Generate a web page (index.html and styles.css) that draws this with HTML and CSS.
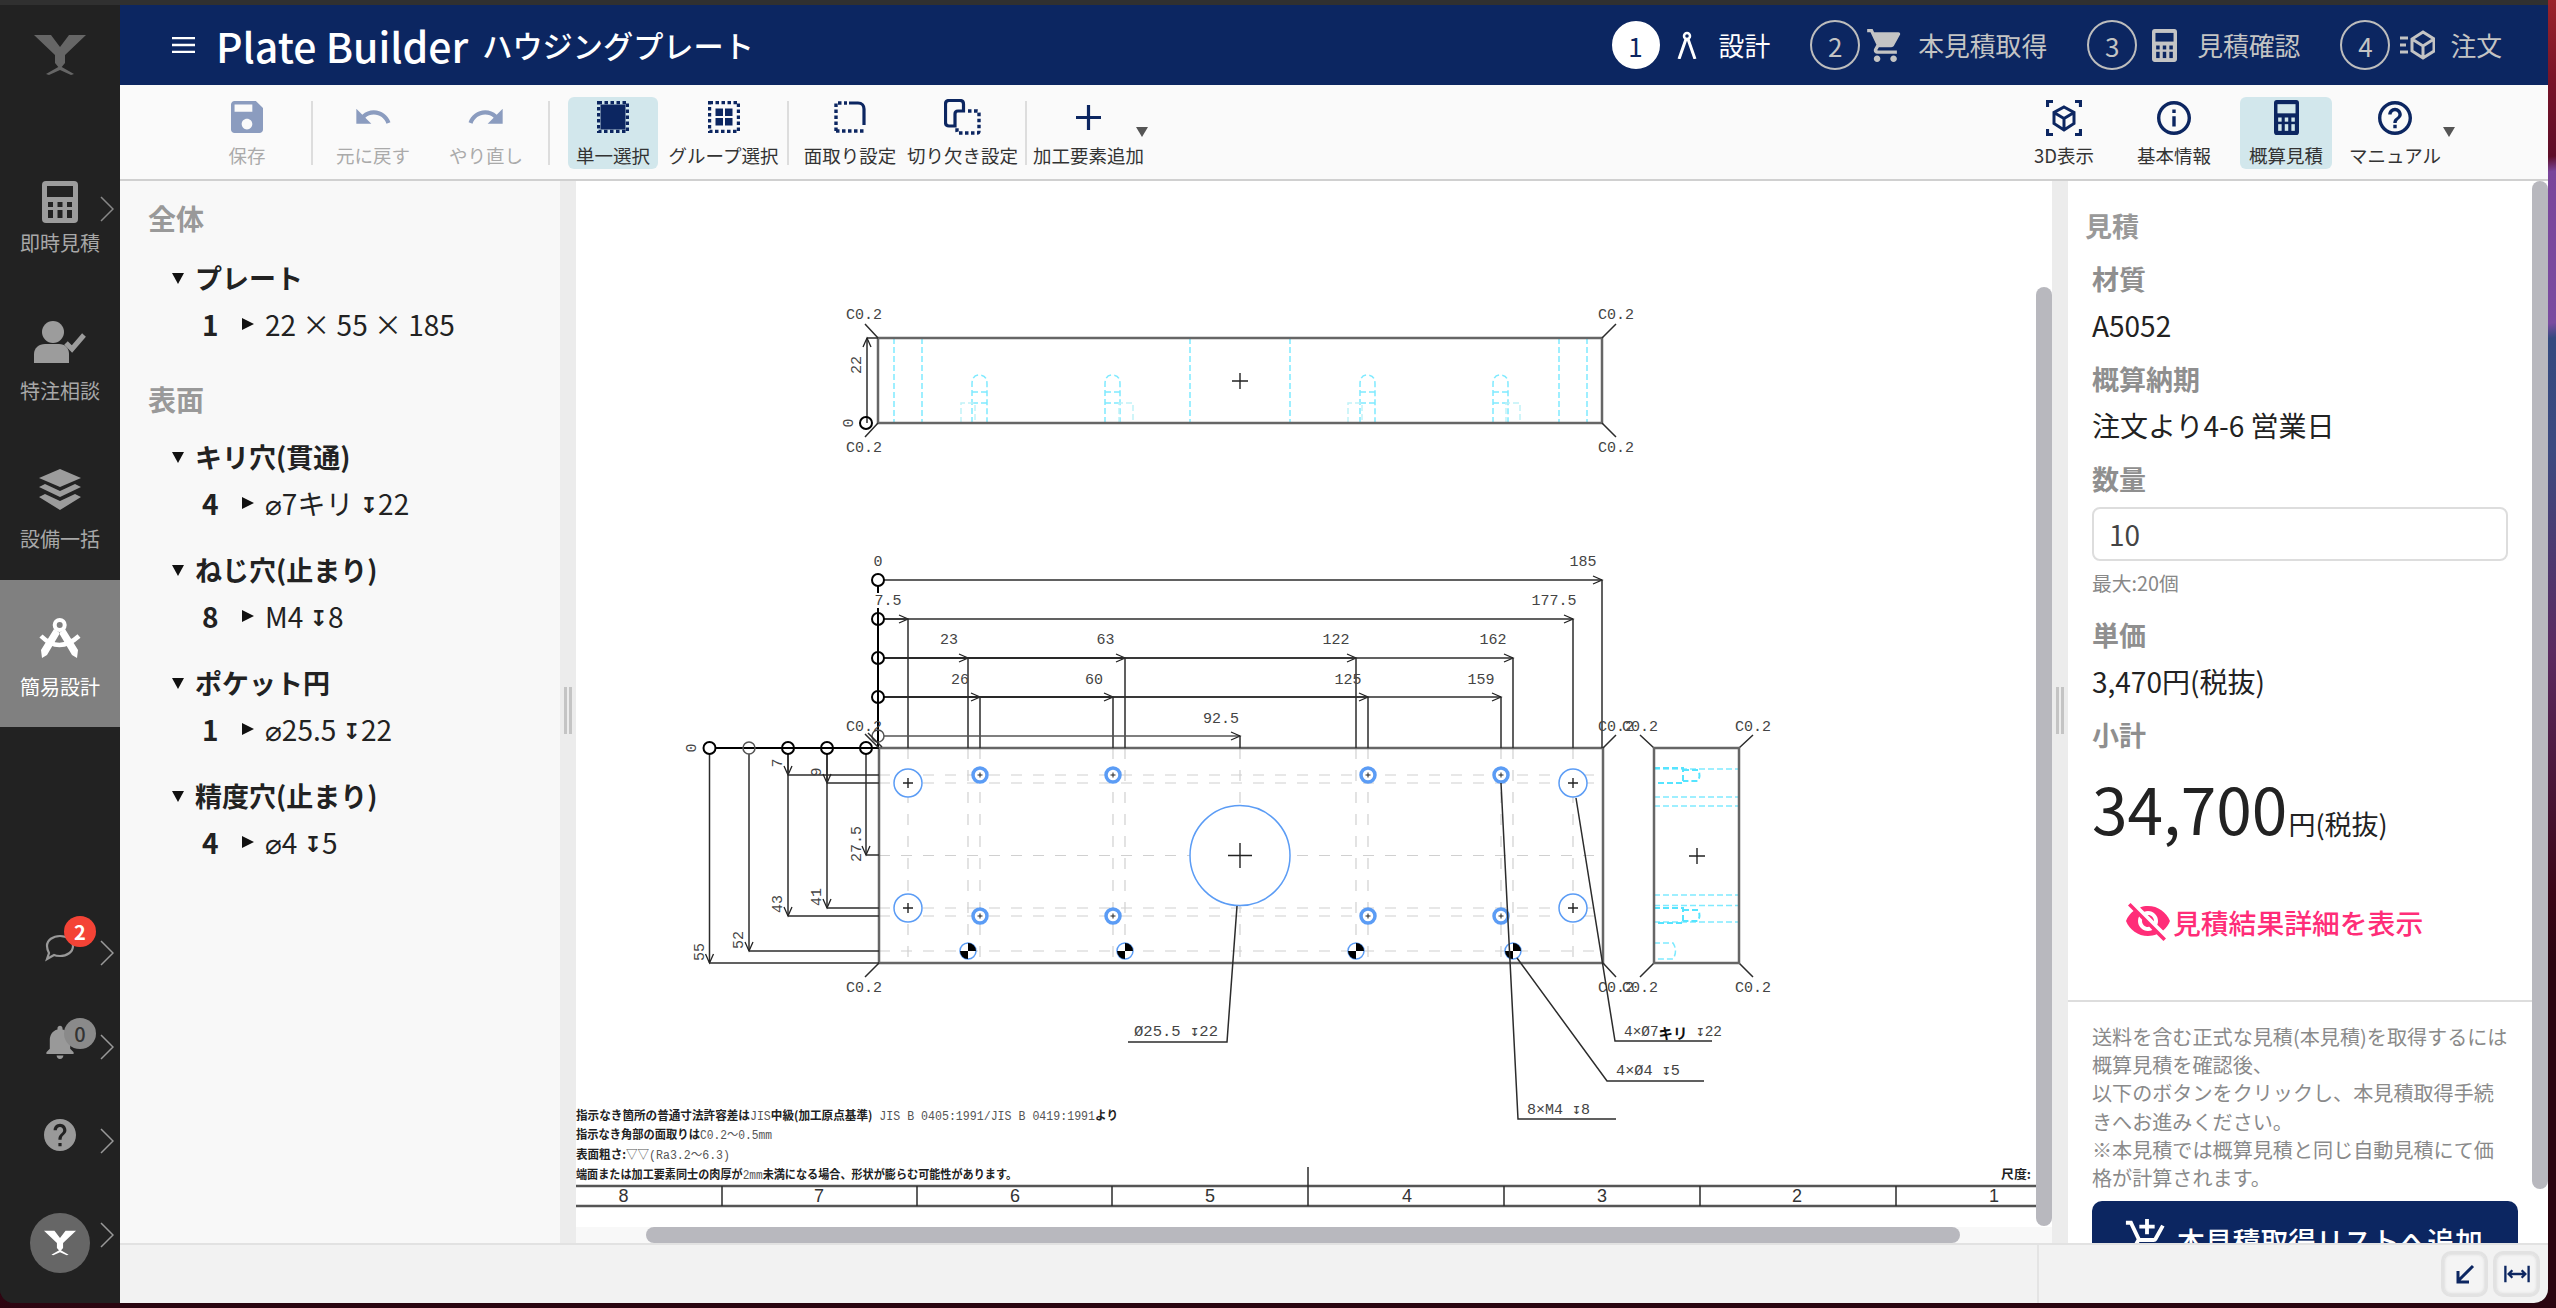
FILE: index.html
```html
<!DOCTYPE html>
<html lang="ja">
<head>
<meta charset="utf-8">
<title>Plate Builder</title>
<link rel="stylesheet" href="styles.css">
</head>
<body>
<svg class="defs" aria-hidden="true">
  <symbol id="i-calc" viewBox="0 0 36 42" preserveAspectRatio="none">
    <rect width="36" height="42" rx="4" fill="currentColor"/>
    <rect class="hole" x="5" y="5" width="26" height="11"/>
    <rect class="hole" x="6" y="21" width="5" height="5"/><rect class="hole" x="15.5" y="21" width="5" height="5"/><rect class="hole" x="25" y="21" width="5" height="5"/>
    <rect class="hole" x="6" y="29" width="5" height="8"/><rect class="hole" x="15.5" y="29" width="5" height="8"/><rect class="hole" x="25" y="29" width="5" height="8"/>
  </symbol>
  <symbol id="i-cube" viewBox="0 0 36 36">
    <path d="M18 7l10 5.500v11L18 30 8 23.500v-11zM8 12.500l10 6 10-6M18 18.500V30" fill="none" stroke="currentColor" stroke-width="3"/>
  </symbol>
  <symbol id="i-chev" viewBox="0 0 14 26">
    <path d="M1 1l12 12L1 25" fill="none" stroke="currentColor" stroke-width="1.5"/>
  </symbol>
  <symbol id="i-logo" viewBox="0 0 52 40">
    <path d="M0 0h17l9 12 9-12h17L31 20v8l-5 6-5-6v-8z" fill="currentColor"/>
    <path d="M12 39l14-8 14 8-3 1-11-5-11 5z" fill="currentColor"/>
  </symbol>
</svg>

<div class="window">
  <div class="titlestrip"></div>
  <div class="app">
    <nav class="sidebar">
      <div class="brand"><svg class="brand-logo"><use href="#i-logo"/></svg></div>
      <a class="nav-item nav-item-first">
        <svg class="nav-icon nav-calc"><use href="#i-calc"/></svg>
        <span class="nav-label">即時見積</span>
        <svg class="nav-chev"><use href="#i-chev"/></svg>
      </a>
      <a class="nav-item">
        <svg class="nav-icon" viewBox="0 0 54 42"><circle cx="20" cy="11" r="11" fill="currentColor"/><path d="M1 42V33c0-6 5-10 11-10h14c6 0 10 4 10 10v9z" fill="currentColor"/><path d="M33 22l6 6 12-14" fill="none" stroke="currentColor" stroke-width="5"/></svg>
        <span class="nav-label">特注相談</span>
      </a>
      <a class="nav-item">
        <svg class="nav-icon" viewBox="0 0 42 42"><path d="M21 0l21 9-21 9L0 9z" fill="currentColor"/><path d="M6 15l15 7 15-7 6 3-21 10L0 18z" fill="currentColor"/><path d="M6 25l15 7 15-7 6 3-21 13L0 28z" fill="currentColor"/></svg>
        <span class="nav-label">設備一括</span>
      </a>
      <a class="nav-item nav-item-active">
        <svg class="nav-icon" viewBox="0 0 42 42"><circle cx="20.700" cy="8" r="5" fill="none" stroke="currentColor" stroke-width="4"/><path d="M15 12l6 4L8 38l-5 3-1-8zM26 12l-6 4 13 22 5 3 1-8z" fill="currentColor"/><path d="M2 19q18 18 38 0" fill="none" stroke="currentColor" stroke-width="4.500"/></svg>
        <span class="nav-label">簡易設計</span>
      </a>
      <div class="nav-foot">
        <div class="foot-row">
          <div class="foot-box foot-up">
            <svg class="foot-chat" viewBox="0 0 30 28"><path d="M15 2c7 0 13 4 13 10s-6 10-13 10c-2 0-4 0-6-1l-7 4 2-6c-1-2-2-4-2-7C2 6 8 2 15 2z" fill="none" stroke="currentColor" stroke-width="2.200"/></svg>
            <span class="badge badge-red">2</span>
          </div>
          <svg class="foot-chev"><use href="#i-chev"/></svg>
        </div>
        <div class="foot-row">
          <div class="foot-box foot-up">
            <svg class="foot-bell" viewBox="2 2 20 20"><path d="M12 22c1.100 0 2-.9 2-2h-4c0 1.100.89 2 2 2zm6-6v-5c0-3.070-1.640-5.640-4.500-6.320V4c0-.83-.67-1.500-1.500-1.500s-1.500.67-1.500 1.500v.68C7.630 5.360 6 7.920 6 11v5l-2 2v1h16v-1l-2-2z" fill="currentColor"/></svg>
            <span class="badge badge-gray">0</span>
          </div>
          <svg class="foot-chev"><use href="#i-chev"/></svg>
        </div>
        <div class="foot-row">
          <div class="foot-box foot-up2">
            <svg class="foot-help" viewBox="2 2 20 20"><path d="M12 2C6.480 2 2 6.480 2 12s4.480 10 10 10 10-4.480 10-10S17.520 2 12 2zm1 17h-2v-2h2v2zm2.070-7.750l-.9.92C13.450 12.900 13 13.500 13 15h-2v-.5c0-1.100.45-2.100 1.170-2.830l1.240-1.260c.37-.36.59-.86.59-1.410 0-1.100-.9-2-2-2s-2 .9-2 2H8c0-2.210 1.790-4 4-4s4 1.790 4 4c0 .88-.36 1.680-.93 2.250z" fill="currentColor"/></svg>
          </div>
          <svg class="foot-chev"><use href="#i-chev"/></svg>
        </div>
        <div class="foot-row">
          <div class="foot-box foot-down">
            <div class="avatar"><svg class="avatar-logo"><use href="#i-logo"/></svg></div>
          </div>
          <svg class="foot-chev"><use href="#i-chev"/></svg>
        </div>
      </div>
    </nav>

    <div class="main">
      <header class="appbar">
        <svg class="menu-icon" viewBox="0 0 23 16"><path d="M0 1h23M0 8h23M0 15h23" stroke="currentColor" stroke-width="2.400"/></svg>
        <span class="app-title">Plate Builder</span>
        <span class="app-sub">ハウジングプレート</span>
        <ol class="steps">
          <li class="step step-current">
            <span class="step-num">1</span>
            <svg class="step-icon si-compass" viewBox="0 0 20 28"><circle cx="10" cy="5" r="3" fill="none" stroke="currentColor" stroke-width="2.500"/><path d="M9 8L2 28M11 8l7 20" stroke="currentColor" stroke-width="3"/></svg>
            <span class="step-text st-1">設計</span>
          </li>
          <li class="step">
            <span class="step-num">2</span>
            <svg class="step-icon si-cart" viewBox="1 2 21 20"><path d="M7 18c-1.100 0-1.990.9-1.990 2S5.900 22 7 22s2-.9 2-2-.9-2-2-2zM1 2v2h2l3.600 7.590-1.350 2.450c-.16.28-.25.61-.25.96 0 1.100.9 2 2 2h12v-2H7.420c-.14 0-.25-.11-.25-.25l.03-.12.9-1.630h7.450c.75 0 1.410-.41 1.750-1.030l3.580-6.490c.08-.14.12-.31.12-.48 0-.55-.45-1-1-1H5.210l-.94-2H1zm16 16c-1.100 0-1.990.9-1.990 2s.89 2 1.990 2 2-.9 2-2-.9-2-2-2z" fill="currentColor"/></svg>
            <span class="step-text st-2">本見積取得</span>
          </li>
          <li class="step">
            <span class="step-num">3</span>
            <svg class="step-icon si-calc"><use href="#i-calc"/></svg>
            <span class="step-text st-3">見積確認</span>
          </li>
          <li class="step">
            <span class="step-num">4</span>
            <svg class="step-icon si-order" viewBox="0 0 35 30"><path d="M0 8h8M0 15h6M0 22h8" stroke="currentColor" stroke-width="3"/><path d="M23 2l11 7v12l-11 7-11-7V9zM12 9l11 7 11-7M23 16v12" fill="none" stroke="currentColor" stroke-width="3"/></svg>
            <span class="step-text st-4">注文</span>
          </li>
        </ol>
      </header>

      <div class="toolbar">
        <button class="tool tool-save is-disabled"><svg class="tool-icon" viewBox="3 3 18 18"><path d="M17 3H5c-1.110 0-2 .9-2 2v14c0 1.100.89 2 2 2h14c1.100 0 2-.9 2-2V7l-4-4zm-5 16c-1.660 0-3-1.340-3-3s1.340-3 3-3 3 1.340 3 3-1.340 3-3 3zm3-10H5V5h10v4z"/></svg><span class="tool-label">保存</span></button>
        <span class="sep sep-1"></span>
        <button class="tool tool-undo is-disabled"><svg class="tool-icon" viewBox="0 0 24 24"><path d="M12.500 8c-2.650 0-5.050.99-6.900 2.600L2 7v9h9l-3.620-3.620c1.390-1.160 3.160-1.880 5.120-1.880 3.540 0 6.550 2.310 7.600 5.500l2.370-.78C21.080 11.030 17.150 8 12.500 8z"/></svg><span class="tool-label">元に戻す</span></button>
        <button class="tool tool-redo is-disabled"><svg class="tool-icon" viewBox="0 0 24 24"><path d="M18.400 10.600C16.550 8.990 14.150 8 11.500 8c-4.650 0-8.580 3.030-9.960 7.220L3.900 16c1.050-3.190 4.050-5.500 7.600-5.500 1.950 0 3.730.72 5.120 1.880L13 16h9V7l-3.600 3.600z"/></svg><span class="tool-label">やり直し</span></button>
        <span class="sep sep-2"></span>
        <button class="tool tool-single is-active"><svg class="tool-icon" viewBox="0 0 32 32"><rect x="3.500" y="3.500" width="25" height="25"/><rect class="dash" x="1.500" y="1.500" width="29" height="29"/></svg><span class="tool-label">単一選択</span></button>
        <button class="tool tool-group"><svg class="tool-icon" viewBox="0 0 32 32"><rect class="dash" x="1.500" y="1.500" width="29" height="29"/><rect x="7.500" y="7.500" width="7.500" height="7.500"/><rect x="17" y="7.500" width="7.500" height="7.500"/><rect x="7.500" y="17" width="7.500" height="7.500"/><rect x="17" y="17" width="7.500" height="7.500"/></svg><span class="tool-label">グループ選択</span></button>
        <span class="sep sep-3"></span>
        <button class="tool tool-chamfer"><svg class="tool-icon" viewBox="0 0 32 32"><path class="dash" d="M2 30V2h11M2 30h28"/><path class="solid" d="M15 2h9c4 0 6 3 6 6v16"/></svg><span class="tool-label">面取り設定</span></button>
        <button class="tool tool-notch"><svg class="tool-icon" viewBox="0 0 37 36"><path class="solid" d="M11 27H5c-2.500 0-3.500-1-3.500-3.500V5C1.500 2.500 2.500 1.500 5 1.500h11c2.500 0 3.500 1 3.500 3.500v7H14c-2 0-3 1-3 3z"/><path class="dash" d="M24 12h9c1.500 0 2 .5 2 2v18c0 1.500-.5 2-2 2H15c-1.500 0-2-.5-2-2v-4"/></svg><span class="tool-label">切り欠き設定</span></button>
        <span class="sep sep-4"></span>
        <button class="tool tool-add"><svg class="tool-icon" viewBox="0 0 25 25"><path d="M0 12.500h25M12.500 0v25" class="solid"/></svg><span class="tool-label">加工要素追加</span><span class="caret caret-add"></span></button>

        <div class="tool-right">
          <button class="tool tool-3d"><svg class="tool-icon" viewBox="0 0 36 36"><path class="solid" d="M7 1.500H1.500V7M29 1.500h5.500V7M7 34.500H1.500V29M29 34.500h5.500V29"/><use href="#i-cube"/></svg><span class="tool-label">3D表示</span></button>
          <button class="tool tool-info"><svg class="tool-icon" viewBox="2 2 20 20"><path d="M11 7h2v2h-2zm0 4h2v6h-2zm1-9C6.480 2 2 6.480 2 12s4.480 10 10 10 10-4.480 10-10S17.520 2 12 2zm0 18c-4.410 0-8-3.590-8-8s3.590-8 8-8 8 3.590 8 8-3.590 8-8 8z"/></svg><span class="tool-label">基本情報</span></button>
          <button class="tool tool-calc is-active"><svg class="tool-icon tool-calc-icon"><use href="#i-calc"/></svg><span class="tool-label">概算見積</span></button>
          <button class="tool tool-manual"><svg class="tool-icon" viewBox="2 2 20 20"><path d="M11 18h2v-2h-2v2zm1-16C6.480 2 2 6.480 2 12s4.480 10 10 10 10-4.480 10-10S17.520 2 12 2zm0 18c-4.410 0-8-3.590-8-8s3.590-8 8-8 8 3.590 8 8-3.590 8-8 8zm0-14c-2.210 0-4 1.790-4 4h2c0-1.100.9-2 2-2s2 .9 2 2c0 2-3 1.750-3 5h2c0-2.250 3-2.500 3-5 0-2.210-1.790-4-4-4z"/></svg><span class="tool-label">マニュアル</span><span class="caret caret-manual"></span></button>
        </div>
      </div>

      <div class="workspace">
        <aside class="tree">
          <section class="tree-sec">
            <h2 class="tree-title">全体</h2>
            <div class="group">
              <h3 class="group-head"><i class="tri-down"></i>プレート</h3>
              <div class="group-row"><span class="count">1</span><i class="tri-right"></i>22 × 55 × 185</div>
            </div>
          </section>
          <section class="tree-sec tree-sec-next">
            <h2 class="tree-title">表面</h2>
            <div class="group">
              <h3 class="group-head"><i class="tri-down"></i>キリ穴(貫通)</h3>
              <div class="group-row"><span class="count">4</span><i class="tri-right"></i>⌀7キリ <span class="depth">↧</span>22</div>
            </div>
            <div class="group">
              <h3 class="group-head"><i class="tri-down"></i>ねじ穴(止まり)</h3>
              <div class="group-row"><span class="count">8</span><i class="tri-right"></i>M4 <span class="depth">↧</span>8</div>
            </div>
            <div class="group">
              <h3 class="group-head"><i class="tri-down"></i>ポケット円</h3>
              <div class="group-row"><span class="count">1</span><i class="tri-right"></i>⌀25.5 <span class="depth">↧</span>22</div>
            </div>
            <div class="group">
              <h3 class="group-head"><i class="tri-down"></i>精度穴(止まり)</h3>
              <div class="group-row"><span class="count">4</span><i class="tri-right"></i>⌀4 <span class="depth">↧</span>5</div>
            </div>
          </section>
        </aside>

        <div class="splitter"><span class="grip"></span></div>

        <div class="canvas">
          <svg class="drawing" viewBox="576 181 1460 1046">
            <defs>
              <marker id="arr" markerWidth="12" markerHeight="10" refX="10" refY="5" orient="auto" markerUnits="userSpaceOnUse"><path class="arrowhead" d="M1 1L10 5 1 9"/></marker>
              <g id="holeTall"><path class="cy" d="M0 423V384q0-9 7.500-9T15 384v39M0 392h15M0 403h15"/></g>
              <g id="holeShort"><path class="cy cy-light" d="M0 423V403h14v20"/></g>
              <g id="tap"><circle class="bl-thick" r="7"/><path class="cross-s" d="M-2.500 0h5M0-2.500v5"/></g>
              <g id="drill"><circle class="bl" r="14"/><path class="cross" d="M-5 0h10M0-5v10"/></g>
              <g id="datum"><circle class="bl" r="8"/><path class="fillk" d="M0 0V-8A8 8 0 0 1 8 0zM0 0V8A8 8 0 0 1-8 0z"/></g>
              <g id="sideHole"><path class="cy cy-strong" d="M0 0h29v15H0zM29 2h15q3 5 0 11H29"/></g>
            </defs>

            <!-- top view -->
            <g class="cy-group">
              <path class="cy" d="M894 338v85M922 338v85M1190 338v85M1290 338v85M1559 338v85M1587 338v85M894 338h28M1559 338h28M894 423h28M1559 423h28"/>
              <use href="#holeTall" x="972"/><use href="#holeShort" x="961"/>
              <use href="#holeTall" x="1105"/><use href="#holeShort" x="1119"/>
              <use href="#holeTall" x="1360"/><use href="#holeShort" x="1348"/>
              <use href="#holeTall" x="1493"/><use href="#holeShort" x="1506"/>
            </g>
            <rect class="outline" x="878" y="338" width="724" height="85"/>
            <path class="dim" d="M865 324l13 14M865 437l13-14M1616 324l-14 14M1616 437l-14-14"/>
            <path class="dim" d="M867 338h11"/>
            <path class="dim" marker-end="url(#arr)" d="M867 423V338"/>
            <ellipse class="dim-circle" cx="866" cy="423" rx="6" ry="6"/>
            <path class="cross" d="M1232 381h16M1240 373v16"/>
            <text class="lbl" x="864" y="315">C0.2</text><text class="lbl" x="1616" y="315">C0.2</text>
            <text class="lbl" x="864" y="448">C0.2</text><text class="lbl" x="1616" y="448">C0.2</text>
            <text class="lbl" transform="rotate(-90 857 365)" x="857" y="365">22</text>
            <text class="lbl" transform="rotate(-90 849 423)" x="849" y="423">0</text>

            <!-- front view centre lines -->
            <path class="cl" d="M879 775h724M879 783h724M879 855.500h724M879 908h724M879 916h724M879 951h724"/>
            <path class="cl" d="M908 748v215M968 748v215M980 748v215M1113 748v215M1125 748v215M1240 748v215M1356 748v215M1368 748v215M1501 748v215M1513 748v215M1573 748v215"/>
            <rect class="outline" x="879" y="748" width="724" height="215"/>

            <!-- holes -->
            <circle class="bl" cx="1240" cy="855.500" r="50"/>
            <path class="cross" d="M1228 855.500h24M1240 843v25"/>
            <use href="#drill" x="908" y="783"/><use href="#drill" x="908" y="908"/><use href="#drill" x="1573" y="783"/><use href="#drill" x="1573" y="908"/>
            <use href="#tap" x="980" y="775"/><use href="#tap" x="1113" y="775"/><use href="#tap" x="1368" y="775"/><use href="#tap" x="1501" y="775"/>
            <use href="#tap" x="980" y="916"/><use href="#tap" x="1113" y="916"/><use href="#tap" x="1368" y="916"/><use href="#tap" x="1501" y="916"/>
            <use href="#datum" x="968" y="951"/><use href="#datum" x="1125" y="951"/><use href="#datum" x="1356" y="951"/><use href="#datum" x="1513" y="951"/>

            <!-- top ordinate dimensions -->
            <path class="dim dim-b" d="M878 586V593M878 608V748"/>
            <path class="dim" marker-end="url(#arr)" d="M884 580H1602"/><path class="dim" d="M1602 580V748"/>
            <path class="dim" marker-end="url(#arr)" d="M884 619H908"/><path class="dim" marker-end="url(#arr)" d="M884 619H1573"/><path class="dim" d="M908 619V748M1573 619V748"/>
            <path class="dim dim-b" marker-end="url(#arr)" d="M884 658H968"/><path class="dim dim-b" marker-end="url(#arr)" d="M884 658H1125"/><path class="dim" marker-end="url(#arr)" d="M884 658H1356"/><path class="dim" marker-end="url(#arr)" d="M884 658H1513"/><path class="dim" d="M968 658V748M1125 658V748M1356 658V748M1513 658V748"/>
            <path class="dim dim-b" marker-end="url(#arr)" d="M884 697H980"/><path class="dim dim-b" marker-end="url(#arr)" d="M884 697H1113"/><path class="dim" marker-end="url(#arr)" d="M884 697H1368"/><path class="dim" marker-end="url(#arr)" d="M884 697H1501"/><path class="dim" d="M980 697V748M1113 697V748M1368 697V748M1501 697V748"/>
            <path class="dim dim-g" marker-end="url(#arr)" d="M884 736H1240"/><path class="dim" d="M1240 736V748"/>
            <circle class="dim-circle" cx="878" cy="580" r="6"/><circle class="dim-circle" cx="878" cy="619" r="6"/><circle class="dim-circle" cx="878" cy="658" r="6"/><circle class="dim-circle" cx="878" cy="697" r="6"/><circle class="dim-circle dim-circle-g" cx="878" cy="736" r="6"/>

            <!-- left ordinate dimensions -->
            <path class="dim dim-b" d="M715 748H879"/>
            <path class="dim" marker-end="url(#arr)" d="M709.500 754V963"/><path class="dim" d="M709.500 963H879"/>
            <path class="dim" marker-end="url(#arr)" d="M749 754V951"/><path class="dim" d="M749 951H879"/>
            <path class="dim" marker-end="url(#arr)" d="M788 754V775"/><path class="dim" marker-end="url(#arr)" d="M788 754V916"/><path class="dim" d="M788 775H879M788 916H879"/>
            <path class="dim" marker-end="url(#arr)" d="M827 754V783"/><path class="dim" marker-end="url(#arr)" d="M827 754V908"/><path class="dim" d="M827 783H879M827 908H879"/>
            <path class="dim" marker-end="url(#arr)" d="M866 754V855"/><path class="dim" d="M866 855H879"/>
            <circle class="dim-circle" cx="709.500" cy="748" r="6"/><circle class="dim-circle dim-circle-g" cx="749" cy="748" r="6"/><circle class="dim-circle" cx="788" cy="748" r="6"/><circle class="dim-circle" cx="827" cy="748" r="6"/><circle class="dim-circle" cx="866" cy="748" r="6"/>

            <!-- chamfer leaders -->
            <path class="dim" d="M879 748l-14-14M882 747l-14-14M879 963l-14 14M1603 748l13-13M1603 963l13 14M1654 748l-14-13M1654 963l-14 14M1739 748l14-13M1739 963l14 14"/>

            <!-- side view -->
            <path class="cy" d="M1654 769h85M1654 797h85M1654 806h85M1654 895h85M1654 905.500h85M1654 922h85M1739 769v153"/>
            <use href="#sideHole" x="1654" y="768"/><use href="#sideHole" x="1654" y="908"/>
            <path class="cy" d="M1654 943h19q5 8 0 16h-19z"/>
            <rect class="outline" x="1654" y="748" width="85" height="215"/>
            <path class="cross" d="M1689 856h16M1697 848v16"/>

            <!-- labels -->
            <text class="lbl" x="878" y="562">0</text><text class="lbl" x="1583" y="562">185</text>
            <text class="lbl" x="888" y="601">7.5</text><text class="lbl" x="1554" y="601">177.5</text>
            <text class="lbl" x="949" y="640">23</text><text class="lbl" x="1105.500" y="640">63</text><text class="lbl" x="1336" y="640">122</text><text class="lbl" x="1493" y="640">162</text>
            <text class="lbl" x="960" y="680">26</text><text class="lbl" x="1094" y="680">60</text><text class="lbl" x="1348" y="680">125</text><text class="lbl" x="1481" y="680">159</text>
            <text class="lbl" x="1221" y="719">92.5</text>
            <text class="lbl" x="864" y="727">C0.2</text><text class="lbl" x="1616" y="727">C0.2</text><text class="lbl" x="1640" y="727">C0.2</text><text class="lbl" x="1753" y="727">C0.2</text>
            <text class="lbl" x="864" y="988">C0.2</text><text class="lbl" x="1616" y="988">C0.2</text><text class="lbl" x="1640" y="988">C0.2</text><text class="lbl" x="1753" y="988">C0.2</text>
            <text class="lbl" transform="rotate(-90 692 748)" x="692" y="748">0</text>
            <text class="lbl" transform="rotate(-90 700 952)" x="700" y="952">55</text>
            <text class="lbl" transform="rotate(-90 739 940)" x="739" y="940">52</text>
            <text class="lbl" transform="rotate(-90 778 763)" x="778" y="763">7</text>
            <text class="lbl" transform="rotate(-90 778 904)" x="778" y="904">43</text>
            <text class="lbl" transform="rotate(-90 817 772)" x="817" y="772">9</text>
            <text class="lbl" transform="rotate(-90 817 897)" x="817" y="897">41</text>
            <text class="lbl" transform="rotate(-90 857 844)" x="857" y="844">27.5</text>

            <!-- callouts -->
            <path class="dim" d="M1237 906L1227 1042H1128"/>
            <path class="dim" d="M1501 783L1518 1119H1616"/>
            <path class="dim" d="M1517 958L1607 1081H1704"/>
            <path class="dim" d="M1576 798L1615 1041H1712"/>
            <text class="lbl lbl-start" x="1134" y="1032" textLength="84" lengthAdjust="spacingAndGlyphs">Ø25.5 ↧22</text>
            <text class="lbl lbl-start" x="1527" y="1110" textLength="63" lengthAdjust="spacingAndGlyphs">8×M4 ↧8</text>
            <text class="lbl lbl-start" x="1616" y="1071" textLength="64" lengthAdjust="spacingAndGlyphs">4×Ø4 ↧5</text>
            <text class="lbl lbl-start" x="1624" y="1032" textLength="98" lengthAdjust="spacingAndGlyphs">4×Ø7<tspan class="lbl-jp">キリ</tspan> ↧22</text>

            <!-- notes -->
            <text class="note" x="576" y="1120" textLength="542" lengthAdjust="spacingAndGlyphs">指示なき箇所の普通寸法許容差は<tspan class="note-m">JIS</tspan>中級(加工原点基準)<tspan class="note-m"> JIS B 0405:1991/JIS B 0419:1991</tspan>より</text>
            <text class="note" x="576" y="1139" textLength="196" lengthAdjust="spacingAndGlyphs">指示なき角部の面取りは<tspan class="note-m">C0.2～0.5mm</tspan></text>
            <text class="note" x="576" y="1159" textLength="154" lengthAdjust="spacingAndGlyphs">表面粗さ:<tspan class="note-m">▽▽(Ra3.2～6.3)</tspan></text>
            <text class="note" x="576" y="1179" textLength="441" lengthAdjust="spacingAndGlyphs">端面または加工要素同士の肉厚が<tspan class="note-m">2mm</tspan>未満になる場合、形状が膨らむ可能性があります。</text>
            <text class="note" x="2001" y="1179" textLength="30" lengthAdjust="spacingAndGlyphs">尺度:</text>

            <!-- title block -->
            <path class="frame" d="M576 1186H2036M576 1206H2036"/>
            <path class="dim" d="M722 1186v20M917 1186v20M1112 1186v20M1308 1167v39M1504 1186v20M1700 1186v20M1896 1186v20"/>
            <text class="zone" x="623.500" y="1196">8</text><text class="zone" x="819" y="1196">7</text><text class="zone" x="1015" y="1196">6</text><text class="zone" x="1210" y="1196">5</text><text class="zone" x="1407" y="1196">4</text><text class="zone" x="1602" y="1196">3</text><text class="zone" x="1797" y="1196">2</text><text class="zone" x="1994" y="1196">1</text>
          </svg>
          <div class="hscroll"><span class="hthumb"></span></div>
          <span class="vthumb"></span>
        </div>

        <div class="splitter"><span class="grip"></span></div>

        <aside class="quote">
          <h2 class="quote-title">見積</h2>
          <div class="field"><div class="field-label">材質</div><div class="field-value">A5052</div></div>
          <div class="field field-tight"><div class="field-label">概算納期</div><div class="field-value">注文より4-6 営業日</div></div>
          <div class="field field-tight"><div class="field-label">数量</div>
            <input class="qty" type="text" value="10">
            <div class="hint">最大:20個</div>
          </div>
          <div class="field field-price"><div class="field-label">単価</div><div class="field-value">3,470円(税抜)</div></div>
          <div class="field field-tight"><div class="field-label field-label-tot">小計</div>
            <div class="total"><span class="total-num">34,700</span><span class="total-unit">円(税抜)</span></div>
          </div>
          <a class="detail-link">
            <svg class="eye" viewBox="1 3 22 19"><path d="M12 7c2.760 0 5 2.240 5 5 0 .65-.13 1.260-.36 1.830l2.920 2.920c1.510-1.260 2.700-2.890 3.430-4.750-1.730-4.390-6-7.500-11-7.500-1.400 0-2.740.25-3.980.7l2.160 2.160C10.740 7.130 11.350 7 12 7zM2 4.270l2.280 2.280.46.46C3.080 8.300 1.780 10.020 1 12c1.730 4.390 6 7.500 11 7.500 1.550 0 3.030-.3 4.380-.84l.42.42L19.730 22 21 20.730 3.270 3 2 4.270zM7.530 9.800l1.550 1.550c-.05.21-.08.43-.08.65 0 1.660 1.340 3 3 3 .22 0 .44-.03.65-.08l1.550 1.550c-.67.33-1.410.53-2.200.53-2.760 0-5-2.240-5-5 0-.79.2-1.530.53-2.200zm4.310-.78l3.150 3.150.02-.16c0-1.660-1.340-3-3-3l-.17.01z"/></svg>
            <span>見積結果詳細を表示</span>
          </a>
          <div class="quote-foot">
            <p class="notice">送料を含む正式な見積(本見積)を取得するには<br>概算見積を確認後、<br>以下のボタンをクリックし、本見積取得手続<br>きへお進みください。<br>※本見積では概算見積と同じ自動見積にて価<br>格が計算されます。</p>
            <button class="cta">
              <svg class="cta-icon" viewBox="0 0 24 24"><path d="M11 9h2V6h3V4h-3V1h-2v3H8v2h3v3zm-4 9c-1.100 0-1.990.9-1.990 2S5.900 22 7 22s2-.9 2-2-.9-2-2-2zm10 0c-1.100 0-1.990.9-1.990 2s.89 2 1.990 2 2-.9 2-2-.9-2-2-2zm-9.830-3.250l.03-.12.9-1.630h7.450c.75 0 1.410-.41 1.750-1.030l3.860-7.010L19.420 4h-.01l-1.100 2-2.760 5H8.530l-.13-.27L6.160 6l-.95-2-.94-2H1v2h2l3.600 7.590-1.350 2.450c-.16.28-.25.61-.25.96 0 1.100.9 2 2 2h12v-2H7.420c-.13 0-.25-.11-.25-.25z"/></svg>
              <span>本見積取得リストへ追加</span>
            </button>
          </div>
          <span class="quote-thumb"></span>
        </aside>
      </div>

      <footer class="status">
        <div class="status-right">
          <button class="view-btn"><svg viewBox="0 0 20 20"><path d="M18 2L3 17M3 7v11h11" fill="none" stroke="currentColor" stroke-width="3"/></svg></button>
          <button class="view-btn"><svg viewBox="0 0 28 20"><path d="M1.500 1v18M26.500 1v18M5 10h18M9 6l-4 4 4 4M19 6l4 4-4 4" fill="none" stroke="currentColor" stroke-width="2.500"/></svg></button>
        </div>
      </footer>
    </div>
  </div>
</div>
</body>
</html>
```

FILE: styles.css
```css
* { box-sizing: border-box; }
html, body { margin: 0; height: 100%; }
body {
  width: 2556px;
  height: 1308px;
  overflow: hidden;
  font-family: "Noto Sans CJK JP", "Noto Sans", sans-serif;
  color: #222;
  background: linear-gradient(172deg, #1b1e46 0, #1f1f48 310px, #a82a2c 325px, #7a1428 430px, #5e0d28 510px, #7a459b 525px, #7a4ba0 675px, #34497f 690px, #3c4a80 800px, #5b2a60 1000px, #3a0616 1240px, #2a0510 1308px);
}
.defs { position: absolute; width: 0; height: 0; }
button { font: inherit; border: 0; background: none; padding: 0; color: inherit; }
h2, h3, p, ol { margin: 0; padding: 0; }
ol { list-style: none; }

.window {
  width: 2548px;
  height: 1303px;
  display: flex;
  flex-direction: column;
  overflow: hidden;
  border-radius: 0 0 14px 14px;
  background: #222;
}
.titlestrip { flex: 0 0 5px; background: #303030; }
.app { flex: 1; display: flex; min-height: 0; }

/* sidebar */
.sidebar { flex: 0 0 120px; display: flex; flex-direction: column; background: #222; color: #a0a0a0; }
.brand { height: 131px; padding: 30px 0 0 34px; }
.brand-logo { width: 52px; height: 40px; color: #666; display: block; }
.nav-item { position: relative; height: 148px; padding-top: 37px; display: flex; flex-direction: column; align-items: center; }
.nav-icon { height: 42px; width: 54px; display: block; color: #9c9c9c; --hole: #222; }
.nav-calc { width: 36px; }
.nav-label { margin-top: 15px; font-size: 20px; line-height: 26px; color: #a8a8a8; }
.nav-item-first { padding-top: 45px; }
.nav-item-first .nav-label { margin-top: 7px; }
.nav-chev { position: absolute; left: 100px; top: 60px; width: 14px; height: 26px; color: #888; }
.nav-item-active { background: #808080; height: 147px; }
.nav-item-active .nav-icon, .nav-item-active .nav-label { color: #fff; }
.hole { fill: var(--hole); }

.nav-foot { margin-top: auto; padding-bottom: 21px; }
.foot-row { height: 94px; padding-left: 30px; display: flex; align-items: center; }
.foot-box { position: relative; width: 60px; height: 60px; display: flex; align-items: center; justify-content: center; color: #999; }
.foot-up { margin-bottom: 10px; }
.foot-up2 { margin-bottom: 12px; }
.foot-down { margin-top: 16px; }
.foot-chev { width: 14px; height: 26px; margin-left: 10px; color: #999; }
.foot-chat { width: 30px; height: 28px; }
.foot-bell { width: 34px; height: 34px; }
.foot-help { width: 32px; height: 32px; }
.badge { position: absolute; left: 34px; top: 0; width: 32px; height: 31px; border-radius: 50%; text-align: center; font-size: 20px; line-height: 31px; font-weight: 700; }
.badge-red { background: #f44336; color: #fff; top: -2px; }
.badge-gray { background: #8a8a8a; color: #333; font-weight: 500; top: 6px; }
.avatar { width: 60px; height: 60px; border-radius: 50%; background: #666; display: flex; align-items: center; justify-content: center; }
.avatar-logo { width: 32px; height: 26px; color: #fff; }

.main { flex: 1; min-width: 0; display: flex; flex-direction: column; }

/* app bar */
.appbar { flex: 0 0 80px; display: flex; align-items: center; padding-left: 52px; padding-right: 46px; background: #0c2661; color: #fff; }
.menu-icon { width: 23px; height: 16px; margin-right: 21px; }
.app-title { font-size: 41px; font-weight: 500; line-height: 60px; }
.app-sub { margin-left: 14px; font-size: 30.200px; font-weight: 500; line-height: 60px; }
.steps { margin-left: auto; display: flex; gap: 40px; align-items: center; }
.step { display: flex; align-items: center; color: #c4c4c4; --hole: #0c2661; }
.step-num { flex: 0 0 50px; height: 50px; border: 2px solid #bdbdbd; border-radius: 50%; display: flex; align-items: center; justify-content: center; font-size: 26px; }
.step-current { color: #fff; }
.step-current .step-num { flex-basis: 48px; height: 48px; background: #fff; border-color: #fff; color: #0c2661; }
.step-text { font-size: 25.800px; line-height: 40px; }
.step-icon { display: block; }
.si-compass { width: 20px; height: 28px; margin-left: 17px; }
.si-cart { width: 35px; height: 33px; margin-left: 7px; }
.si-calc { width: 25px; height: 33px; margin-left: 15px; }
.si-order { width: 35px; height: 30px; margin-left: 10px; }
.st-1 { margin-left: 22px; }
.st-2 { margin-left: 16px; }
.st-3 { margin-left: 20px; }
.st-4 { margin-left: 15px; }

/* toolbar */
.toolbar { flex: 0 0 96px; display: flex; align-items: flex-start; padding: 12px 0 0 77px; background: #fafafa; border-bottom: 2px solid #d0d0d0; }
.tool { position: relative; flex: none; height: 72px; width: 100px; border-radius: 6px; display: flex; flex-direction: column; align-items: center; color: #333; }
.tool-icon { width: 40px; height: 40px; display: block; fill: #0c2661; color: #0c2661; --hole: #fafafa; }
.tool-label { margin-top: 6px; font-size: 18.500px; line-height: 24px; white-space: nowrap; }
.is-disabled .tool-label { color: #aaa; }
.is-disabled .tool-icon { fill: #8b9cbf; }
.is-active { background: #d2e7ec; }
.is-active .tool-icon { --hole: #d2e7ec; }
.sep { flex: none; width: 2px; height: 64px; margin-top: 4px; background: #ddd; }
.sep-1 { margin-left: 14px; margin-right: 10px; }
.sep-2 { margin-left: 12px; margin-right: 18px; }
.sep-3 { margin-left: 8px; margin-right: 14px; }
.sep-4 { margin-left: 6px; margin-right: 5px; }
.tool-save .tool-icon { width: 32px; height: 32px; margin: 4px 0; }
.tool-redo { margin-left: 13px; }
.tool-single { width: 90px; }
.tool-group { width: 111px; margin-left: 10px; }
.tool-chamfer { width: 94px; }
.tool-notch { width: 113px; margin-left: 9px; }
.tool-add { width: 113px; }
.tool-single .tool-icon, .tool-group .tool-icon, .tool-chamfer .tool-icon { width: 32px; height: 32px; margin: 4px 0; }
.tool-notch .tool-icon { width: 37px; height: 36px; margin: 2px 0; }
.tool-add .tool-icon { width: 25px; height: 25px; margin: 8px 0 7px; }
.dash { fill: none; stroke: #0c2661; stroke-width: 3.400; stroke-dasharray: 3.500 2.500; }
.solid { fill: none; stroke: #0c2661; stroke-width: 3.200; }
.tool-right { margin-left: auto; margin-right: 107px; display: flex; }
.tool-3d { width: 70px; }
.tool-3d .tool-icon { width: 36px; height: 36px; margin: 3px 0 1px; }
.tool-info { width: 92px; margin-left: 29px; }
.tool-info .tool-icon, .tool-manual .tool-icon { width: 34px; height: 36px; margin: 3px 0 1px; }
.tool-calc { width: 92px; margin-left: 20px; }
.tool-calc-icon { width: 25px; height: 35px; margin: 3px 0 2px; }
.tool-manual { width: 92px; margin-left: 17px; }
.caret { position: absolute; top: 30px; width: 0; height: 0; border-left: 6px solid transparent; border-right: 6px solid transparent; border-top: 10px solid #555; }
.caret-add { left: 104px; }
.caret-manual { left: 94px; }

/* workspace */
.workspace { flex: 1; min-height: 0; display: flex; }
.tree { flex: 0 0 440px; padding-top: 18px; background: #f8f8f8; overflow: hidden; }
.tree-title { padding-left: 28px; font-size: 28px; line-height: 38px; font-weight: 700; color: #999; margin-bottom: 22px; }
.tree-sec-next { margin-top: 37px; }
.tree-sec-next .tree-title { margin-bottom: 20px; }
.group { margin-bottom: 29px; }
.group-head { padding-left: 52px; display: flex; align-items: center; font-size: 27px; line-height: 38px; font-weight: 700; color: #222; }
.group-row { margin-top: 8px; padding-left: 82px; display: flex; align-items: center; font-size: 28px; line-height: 38px; color: #222; white-space: pre; font-family: "Noto Sans CJK JP", "DejaVu Sans", sans-serif; }
.count { width: 40px; font-weight: 700; }
.depth { font-size: 22px; font-weight: 700; }
.tri-down { width: 0; height: 0; margin-right: 11px; border-left: 6.500px solid transparent; border-right: 6.500px solid transparent; border-top: 11px solid #111; }
.tri-right { width: 0; height: 0; margin-right: 11px; border-top: 6.500px solid transparent; border-bottom: 6.500px solid transparent; border-left: 12px solid #111; }

.splitter { flex: 0 0 16px; display: flex; align-items: center; justify-content: center; padding-bottom: 4px; background: #ececec; }
.grip { width: 8px; height: 47px; border-left: 3px solid #c4c4c4; border-right: 3px solid #c4c4c4; }

.canvas { position: relative; flex: 0 0 1476px; background: #fff; overflow: hidden; }
.drawing { display: block; width: 1460px; height: 1046px; }
.hscroll { position: absolute; left: 0; right: 0; bottom: 0; height: 16px; background: #f8f8f8; }
.hthumb { position: absolute; left: 70px; width: 1314px; top: 0; height: 16px; border-radius: 8px; background: #b8b8be; }
.vthumb { position: absolute; right: 0; top: 106px; width: 16px; height: 939px; border-radius: 8px; background: #b8b8be; }

/* drawing */
.outline { fill: none; stroke: #666; stroke-width: 2.500; }
.dim { fill: none; stroke: #2c2c2c; stroke-width: 1.500; }
.dim-b { stroke: #000; stroke-width: 2; }
.dim-g { stroke: #555; }
.dim-circle { fill: none; stroke: #000; stroke-width: 2; }
.dim-circle-g { stroke: #555; stroke-width: 1.500; }
.arrowhead { fill: none; stroke: #222; stroke-width: 1.300; }
.cy { fill: none; stroke: #7feaff; stroke-width: 1.500; stroke-dasharray: 6 3; }
.cy-light { stroke: #c0f2f8; }
.cy-strong { stroke: #55e4ff; stroke-width: 2; }
.cl { fill: none; stroke: #d0d0d0; stroke-width: 1.200; stroke-dasharray: 11 11; }
.bl { fill: #fff; stroke: #5b9cf5; stroke-width: 1.500; }
.bl-thick { fill: #fff; stroke: #5b9cf5; stroke-width: 3.500; }
.cross { fill: none; stroke: #222; stroke-width: 1.400; }
.cross-s { fill: none; stroke: #222; stroke-width: 1; }
.fillk { fill: #000; }
.frame { fill: none; stroke: #555; stroke-width: 2.500; }
.lbl { font-family: "Liberation Mono", "DejaVu Sans Mono", "Noto Sans CJK JP", monospace; font-size: 15px; fill: #444; text-anchor: middle; dominant-baseline: central; }
.lbl-start { text-anchor: start; }
.lbl-jp { font-family: "Noto Sans CJK JP", sans-serif; font-weight: 700; fill: #111; }
.note { font-family: "Noto Sans CJK JP", sans-serif; font-size: 12px; font-weight: 700; fill: #222; }
.note-m { font-family: "Liberation Mono", "Noto Sans CJK JP", monospace; font-weight: 400; fill: #555; }
.zone { font-family: "Liberation Sans", sans-serif; font-size: 18px; fill: #333; text-anchor: middle; dominant-baseline: central; }

/* quote panel */
.quote { position: relative; flex: 1; min-width: 0; padding-top: 26px; background: #fff; overflow: hidden; }
.quote-title { padding-left: 17px; font-size: 27px; line-height: 38px; font-weight: 700; color: #999; }
.field { padding-left: 24px; padding-right: 40px; margin-top: 15px; }
.field-tight { margin-top: 16px; }
.field-price { margin-top: 21px; }
.field-label { font-size: 27px; line-height: 38px; font-weight: 700; color: #8f8f8f; margin-bottom: 8px; }
.field-value { font-size: 28px; line-height: 38px; color: #222; }
.qty { display: block; width: 416px; height: 54px; margin-top: 9px; padding: 0 15px; border: 2px solid #ddd; border-radius: 8px; font: inherit; font-size: 28px; color: #444; background: #fff; }
.field-label:has(+ .qty) { margin-bottom: 0; }
.hint { margin-top: 10px; font-size: 19.800px; line-height: 24px; color: #888; }
.field-label-tot { margin-bottom: 15px; }
.total { display: flex; align-items: baseline; height: 76px; line-height: 76px; white-space: nowrap; }
.total-num { font-size: 64px; color: #222; }
.total-unit { margin-left: 1px; font-size: 27px; color: #222; }
.detail-link { margin-top: 57px; padding-left: 58px; display: flex; align-items: center; height: 40px; color: #ff2d78; font-size: 27.800px; font-weight: 500; }
.eye { width: 44px; height: 38px; fill: currentColor; margin-right: 3px; }
.quote-foot { margin-top: 58px; padding: 21px 30px 0 24px; border-top: 2px solid #ddd; }
.notice { font-size: 20.100px; line-height: 28.200px; color: #8a8a8a; white-space: nowrap; }
.cta { margin-top: 9px; width: 426px; height: 78px; display: flex; align-items: center; padding-left: 32px; border-radius: 10px; background: #0c2661; color: #fff; font-size: 27.800px; font-weight: 500; }
.cta-icon { width: 46px; height: 46px; fill: currentColor; margin-right: 7px; }
.quote-thumb { position: absolute; right: 0; top: 0; width: 16px; height: 1008px; border-radius: 8px; background: #b8b8be; }

/* status bar */
.status { flex: 0 0 60px; display: flex; justify-content: flex-end; background: #f2f2f2; border-top: 2px solid #e2e2e2; }
.status-right { width: 511px; display: flex; align-items: center; justify-content: flex-end; gap: 5px; padding-right: 8px; border-left: 2px solid #e4e4e4; }
.view-btn { width: 47px; height: 46px; border: 3px solid #e2e2e2; border-radius: 10px; background: #f4f4f4; color: #0c2661; display: flex; align-items: center; justify-content: center; box-shadow: inset 0 0 3px #ccc; }
.view-btn svg { width: 26px; height: 20px; }
```
